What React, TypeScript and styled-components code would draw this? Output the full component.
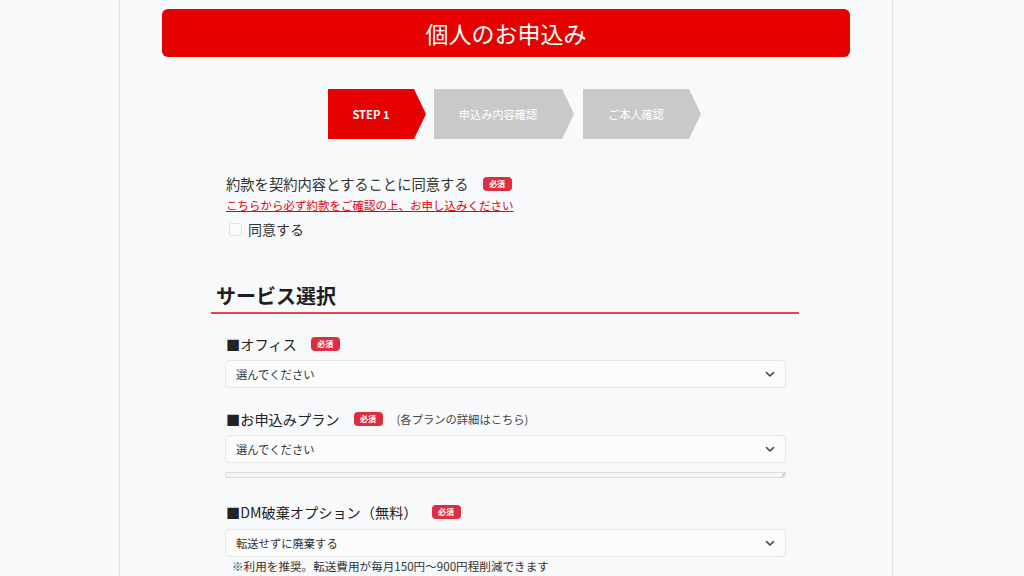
import React from "react";
import styled, { createGlobalStyle } from "styled-components";

const Global = createGlobalStyle`
  html, body { margin: 0; padding: 0; background: #f8f9fa; }
  body { font-family: "Noto Sans CJK JP", "Noto Sans", sans-serif; color: #333; }
`;

const Page = styled.div`
  width: 774px;
  margin: 0 auto;
  padding: 9px 42px 0 42px;
  box-sizing: border-box;
  border-left: 1px solid #dfe1e4;
  border-right: 1px solid #dfe1e4;
  min-height: 576px;
  transform: translateX(-6px);
`;

const TitleBar = styled.h1`
  margin: 0;
  height: 48px;
  background: #e60000;
  border-radius: 6px;
  color: #fff;
  font-size: 23px;
  font-weight: 400;
  display: flex;
  align-items: center;
  justify-content: center;
`;

const Steps = styled.div`
  display: flex;
  margin: 32px 0 0 166px;
  gap: 8px;
`;

const Step = styled.div<{ $active?: boolean; $w: number; $gap?: number }>`
  width: ${(p) => p.$w}px;
  height: 50px;
  background: ${(p) => (p.$active ? "#e60000" : "#c9c9c9")};
  clip-path: polygon(0 0, calc(100% - 12px) 0, 100% 50%, calc(100% - 12px) 100%, 0 100%);
  color: #fff;
  font-size: 11.2px;
  font-weight: ${(p) => (p.$active ? 700 : 400)};
  display: flex;
  align-items: center;
  justify-content: center;
  padding-right: 12px;
  box-sizing: border-box;
  margin-left: ${(p) => p.$gap ?? 0}px;
`;

const Agreement = styled.div`
  margin: 35px 0 0 64px;
`;

const AgreeLabel = styled.div`
  display: flex;
  align-items: center;
  font-size: 14.3px;
  line-height: 20px;
  color: #333;
`;

const Badge = styled.span<{ $ml: number }>`
  display: inline-flex;
  align-items: center;
  justify-content: center;
  width: 29px;
  height: 14px;
  border-radius: 4px;
  background: #dc2e40;
  color: #fff;
  font-size: 8px;
  font-weight: 700;
  margin-left: ${(p) => p.$ml}px;
`;

const TermsLink = styled.a`
  display: block;
  margin-top: 2px;
  font-size: 11.5px;
  line-height: 18px;
  color: #e60012;
  text-decoration: underline;
`;

const CheckRow = styled.label`
  display: flex;
  align-items: center;
  margin-top: 4px;
  font-size: 14px;
  line-height: 22px;
  color: #333;
`;

const Box = styled.span`
  width: 11px;
  height: 11px;
  border: 1px solid #e2e2e2;
  border-radius: 2px;
  background: #fcfcfc;
  margin: 0 6px 0 3px;
`;

const Section = styled.section`
  margin: 42px 51px 0 49px;
`;

const Heading = styled.h2`
  margin: 0;
  padding: 0 0 2px 5px;
  font-size: 20px;
  line-height: 28px;
  font-weight: 700;
  color: #1e1e1e;
  border-bottom: 2px solid #e34646;
`;

const Fields = styled.div`
  padding: 0 13px 0 14px;
`;

const Field = styled.div<{ $mt: number }>`
  margin-top: ${(p) => p.$mt}px;
`;

const Label = styled.div<{ $mb: number }>`
  display: flex;
  align-items: center;
  font-size: 14.2px;
  line-height: 20px;
  color: #222;
  padding-left: 1px;
  margin-bottom: ${(p) => p.$mb}px;
`;

const Sub = styled.span`
  font-size: 11.3px;
  color: #444;
  margin-left: 14px;
`;

const Select = styled.div`
  height: 28px;
  box-sizing: border-box;
  border: 1px solid #e6e7e9;
  border-radius: 4px;
  background: #fbfbfc;
  display: flex;
  align-items: center;
  justify-content: space-between;
  padding: 0 10px 0 10px;
  font-size: 11.3px;
  color: #333;
`;

const TextArea = styled.div`
  margin-top: 9px;
  height: 6px;
  box-sizing: border-box;
  border: 1px solid #dcdcdc;
  border-radius: 2px;
  background: #f4f4f4;
  position: relative;
`;

const Grip = styled.span`
  position: absolute;
  right: 1px;
  bottom: 0;
  width: 5px;
  height: 4px;
  border-right: 1px solid #aaa;
  transform: skewX(-30deg);
`;

const Note = styled.div`
  margin: 1px 0 0 7px;
  font-size: 11.6px;
  line-height: 16px;
  color: #333;
`;

const Chevron = () => (
  <svg width="10" height="7" viewBox="0 0 10 7" fill="none">
    <path d="M1.5 1.5 L5 5 L8.5 1.5" stroke="#444" strokeWidth="1.6" strokeLinecap="round" strokeLinejoin="round" />
  </svg>
);

export default function App() {
  return (
    <>
      <Global />
      <Page>
        <TitleBar>個人のお申込み</TitleBar>
        <Steps>
          <Step $active $w={98}>STEP 1</Step>
          <Step $w={140}>申込み内容確認</Step>
          <Step $w={118} $gap={1}>ご本人確認</Step>
        </Steps>
        <Agreement>
          <AgreeLabel>
            約款を契約内容とすることに同意する<Badge $ml={14}>必須</Badge>
          </AgreeLabel>
          <TermsLink>こちらから必ず約款をご確認の上、お申し込みください</TermsLink>
          <CheckRow>
            <Box />
            同意する
          </CheckRow>
        </Agreement>
        <Section>
          <Heading>サービス選択</Heading>
          <Fields>
            <Field $mt={20}>
              <Label $mb={6}>
                ■オフィス<Badge $ml={14}>必須</Badge>
              </Label>
              <Select>
                選んでください
                <Chevron />
              </Select>
            </Field>
            <Field $mt={21}>
              <Label $mb={6}>
                ■お申込みプラン<Badge $ml={14}>必須</Badge>
                <Sub>(各プランの詳細はこちら)</Sub>
              </Label>
              <Select>
                選んでください
                <Chevron />
              </Select>
              <TextArea>
                <Grip />
              </TextArea>
            </Field>
            <Field $mt={24}>
              <Label $mb={7}>
                ■DM破棄オプション（無料）<Badge $ml={14}>必須</Badge>
              </Label>
              <Select>
                転送せずに廃棄する
                <Chevron />
              </Select>
              <Note>※利用を推奨。転送費用が毎月150円～900円程削減できます</Note>
            </Field>
          </Fields>
        </Section>
      </Page>
    </>
  );
}
